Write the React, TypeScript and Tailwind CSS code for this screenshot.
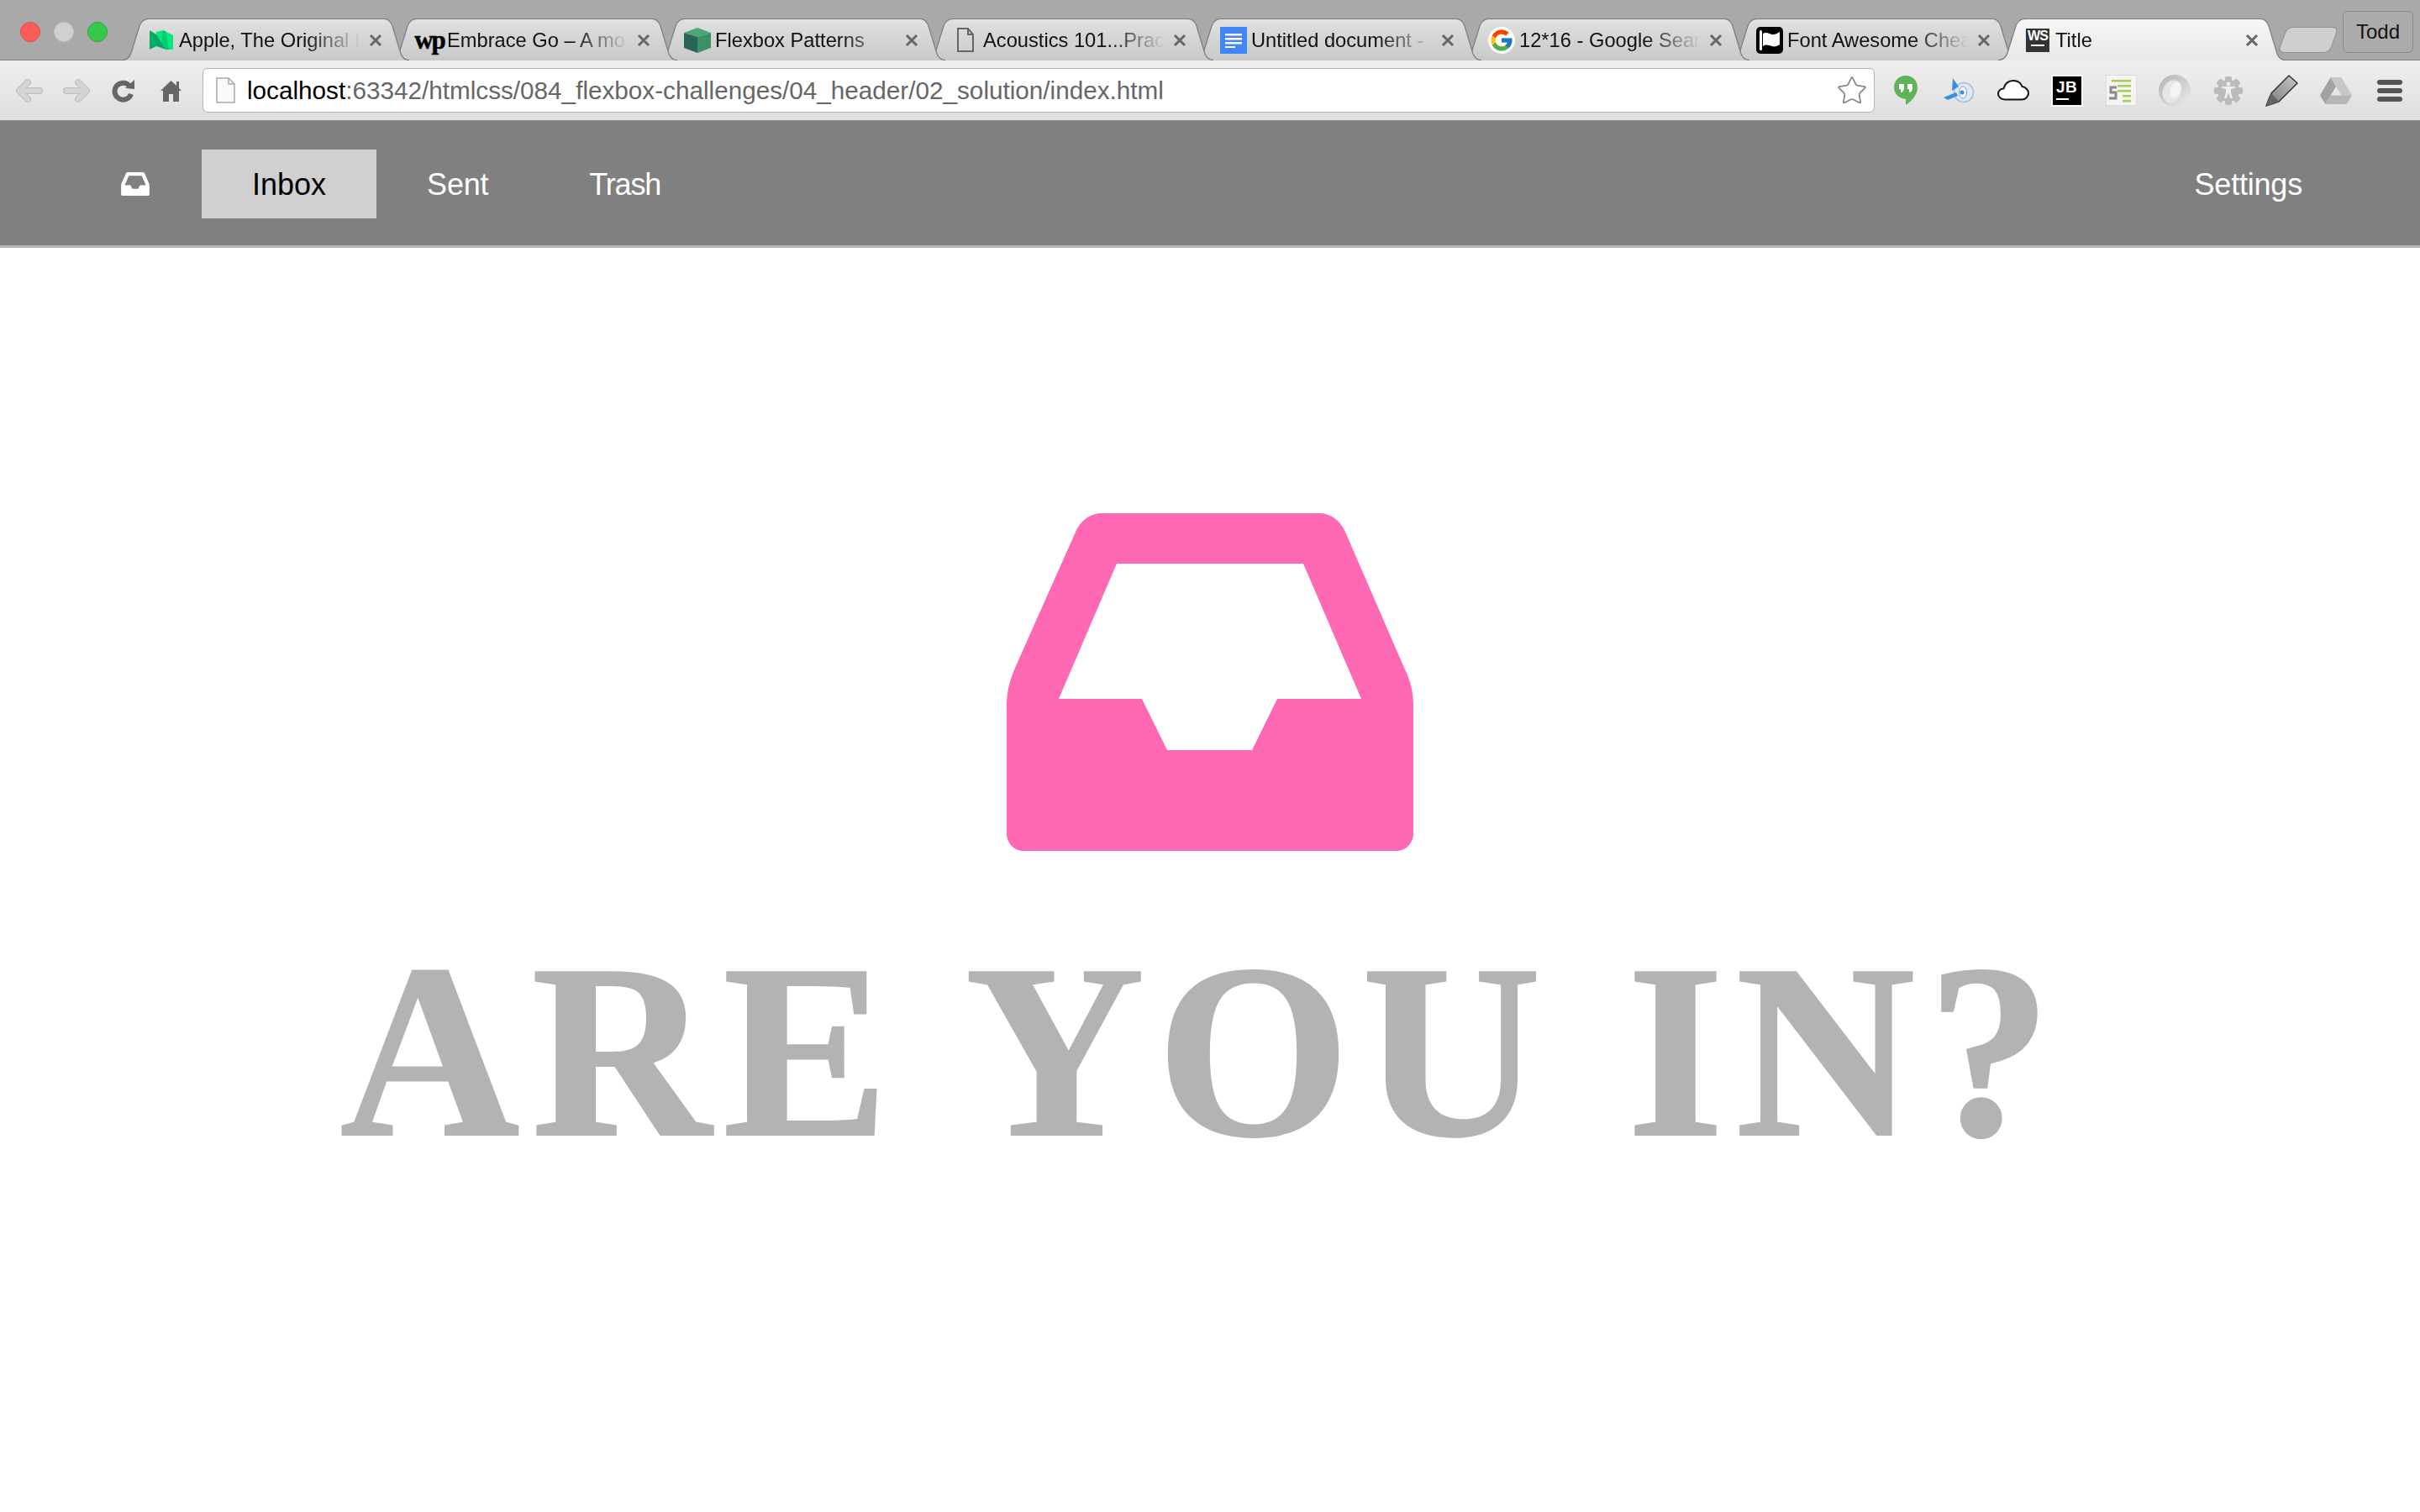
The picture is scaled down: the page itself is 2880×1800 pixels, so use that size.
import React from 'react';
import { Star } from 'lucide-react';
import { FcGoogle } from 'react-icons/fc';

function InboxGlyph({ className }: { className: string }) {
  return (
    <svg className={className} viewBox="0 0 484 402">
      <path
        fill="currentColor"
        fillRule="evenodd"
        d="M0 229C0 212 4 198 10 184L83 20C89 8 100 0 113 0L372 0C385 0 396 8 402 20L474 186C480 198 484 212 484 229L484 381C484 393 475 402 464 402L20 402C9 402 0 393 0 381ZM131 60L62 221L161 221L191 282L292 282L322 221L422 221L353 60Z"
      />
    </svg>
  );
}

function TabShape({ active }: { active: boolean }) {
  const id = active ? 'tab-active' : 'tab-idle';
  return (
    <svg className="absolute inset-0 w-full h-full" viewBox="0 0 342 50" preserveAspectRatio="none">
      <defs>
        <linearGradient id={id} x1="0" y1="0" x2="0" y2="1">
          <stop offset="0" stopColor={active ? '#f6f6f6' : '#e0e0e0'} />
          <stop offset="1" stopColor={active ? '#e8e8e8' : '#c9c9c9'} />
        </linearGradient>
      </defs>
      <path
        fill={`url(#${id})`}
        stroke="none"
        d="M0 50C6 50 9 47 11 41L21 9C23 4 26 0.5 32 0.5L312 0.5C317 0.5 320 4 322 9L332 42C334 47 337 50 342 50Z"
      />
      <path
        fill="none"
        stroke="#7c7c7c"
        strokeWidth="1.2"
        d="M0 49.5C6 49.5 9 47 11 41L21 9C23 4 26 0.5 32 0.5L312 0.5C317 0.5 320 4 322 9L332 42C334 47 337 49.5 342 49.5"
      />
    </svg>
  );
}

const Medium = (
  <svg width="28" height="23" viewBox="0 0 28 23">
    <polygon fill="#00ab6c" points="0,0 8,5 8,19 0,23" />
    <polygon fill="#02e87a" points="8,2 16,0 28,6 28,23 20,23 8,5" />
    <polygon fill="#00a868" points="8,5 20,23 8,19" />
    <polygon fill="#00cf70" points="16,0 19,1.500 23,23 20,23 14,14" />
  </svg>
);

const Cube = (
  <svg width="32" height="30" viewBox="0 0 32 30">
    <polygon fill="#4ba678" points="16,0 32,6 16,11 0,6" />
    <polygon fill="#296556" points="0,6 16,11 16,30 0,24" />
    <polygon fill="#3c9068" points="32,6 16,11 16,30 32,24" />
  </svg>
);

const BlankPage = (
  <svg width="20" height="29" viewBox="0 0 20 29">
    <path fill="none" stroke="#666" strokeWidth="2" d="M1 1H13L19 8V28H1ZM13 1V8H19" />
  </svg>
);

const Docs = (
  <svg width="32" height="32" viewBox="0 0 32 32">
    <rect width="32" height="32" fill="#4285f4" />
    <path fill="#fff" d="M6 8H26V10.500H6ZM6 13H26V15.500H6ZM6 18H26V20.500H6ZM6 23H18V25H6Z" />
  </svg>
);

const Flag = (
  <svg width="32" height="32" viewBox="0 0 32 32">
    <rect width="32" height="32" rx="5" fill="#000" />
    <rect x="4" y="4" width="3" height="24" rx="1.500" fill="#fff" />
    <path fill="#fff" d="M8 8C13 5 17 10 21 9C24 8.500 26 7 28 6V21C25 23 22 24 19 23C15 22 12 20 8 23Z" />
  </svg>
);

const tabs: { title: string; icon: React.ReactNode; active?: boolean }[] = [
  { title: 'Apple, The Original I', icon: Medium },
  {
    title: 'Embrace Go – A mo',
    icon: <span className="font-['Liberation_Serif'] font-bold text-[31px] leading-none tracking-[-2px] text-black [-webkit-text-stroke:0.5px_black]">wp</span>,
  },
  { title: 'Flexbox Patterns', icon: Cube },
  { title: 'Acoustics 101...Prac', icon: BlankPage },
  { title: 'Untitled document -', icon: Docs },
  {
    title: '12*16 - Google Sear',
    icon: (
      <span className="flex w-[32px] h-[32px] items-center justify-center rounded-full bg-white">
        <FcGoogle size={30} />
      </span>
    ),
  },
  { title: 'Font Awesome Chea', icon: Flag },
  {
    title: 'Title',
    active: true,
    icon: (
      <span className="flex flex-col items-center w-[28px] h-[28px] bg-[#333] text-white font-bold text-[16px] leading-[18px] tracking-[-1px]">
        WS
        <span className="w-[16px] h-[2px] bg-white mt-[1px]" />
      </span>
    ),
  },
];

const tabStack = ['z-[8]', 'z-[7]', 'z-[6]', 'z-[5]', 'z-[4]', 'z-[3]', 'z-[2]', 'z-[9]'];

function Tab({ title, icon, active, index }: { title: string; icon: React.ReactNode; active?: boolean; index: number }) {
  return (
    <div className={`relative w-[342px] h-[50px] -mb-px shrink-0 ${index > 0 ? '-ml-[23px]' : ''} ${tabStack[index]}`}>
      <TabShape active={!!active} />
      <div className="relative flex items-center h-full pl-[29px] pt-[1px]">
        <span className="flex w-[36px] justify-center shrink-0">{icon}</span>
        <span className="ml-[3px] w-[216px] overflow-hidden whitespace-nowrap text-[23.7px] leading-[30px] text-[#111] [mask-image:linear-gradient(to_right,black_150px,transparent_216px)]">
          {title}
        </span>
        <svg className="ml-[10px] shrink-0" width="16" height="16" viewBox="0 0 16 16">
          <path stroke="#666" strokeWidth="3" d="M2 2L14 14M14 2L2 14" />
        </svg>
      </div>
    </div>
  );
}

function Arrow({ flip }: { flip?: boolean }) {
  return (
    <svg width="32" height="28" viewBox="0 0 32 28" className={flip ? '-scale-x-100' : ''}>
      <path fill="none" stroke="#bdbdbd" strokeWidth="8" strokeLinecap="round" strokeLinejoin="round" d="M28 14H5M14 4L4 14L14 24" />
      <path fill="none" stroke="#d4d4d4" strokeWidth="6" strokeLinecap="round" strokeLinejoin="round" d="M28 14H5M14 4L4 14L14 24" />
    </svg>
  );
}

const toolbarIcons: React.ReactNode[] = [
  <svg key="hangouts" width="28" height="35" viewBox="0 0 28 35">
    <path fill="#5fb35b" d="M14 0C6 0 0 6 0 14C0 22 6 27 14 28V35C22 30 28 22 28 14C28 6 22 0 14 0Z" />
    <path fill="#fff" d="M6 10H12V15C12 18 10 20 8 20V16H6ZM16 10H22V15C22 18 20 20 18 20V16H16Z" />
  </svg>,
  <svg key="appengine" width="38" height="30" viewBox="0 0 38 30">
    <circle cx="24" cy="17" r="11.500" fill="#dfe8f2" stroke="#9cc0e4" strokeWidth="1.500" />
    <ellipse cx="23" cy="17" rx="4.500" ry="7" fill="#f6f8fb" stroke="#8aa0b8" />
    <circle cx="22" cy="17" r="2.500" fill="#3a8fdc" />
    <polygon fill="#3a8fdc" points="11,0 18,10 10,15" />
    <polygon fill="#3a8fdc" points="0,23 15,17 17,21 5,26" />
  </svg>,
  <svg key="cloud" width="38" height="25" viewBox="0 0 38 25">
    <path fill="#fff" stroke="#111" strokeWidth="2" d="M9 23.500C4 23.500 1 20 1 16.500C1 13 4 10.500 7.500 10.500C9 5 13 1 19 1C24 1 28 4 29.500 8C33.500 8.500 37 12 37 16C37 20 33.500 23.500 29 23.500Z" />
  </svg>,
  <span key="jb" className="flex flex-col w-[38px] h-[38px] border-2 border-white bg-black text-white font-bold text-[19px] leading-[20px] pl-[4px] pt-[3px] tracking-[0.5px]">
    JB
    <span className="w-[15px] h-[2px] bg-white mt-[3px]" />
  </span>,
  <svg key="outliner" width="37" height="37" viewBox="0 0 37 37">
    <rect x="0.500" y="0.500" width="36" height="36" fill="#f4f4f4" stroke="#dcdcdc" />
    <path fill="#a5cf4f" d="M7 6H30V8.500H7ZM14 12H30V14.500H14ZM14 18H30V20.500H14ZM20 24H30V26.500H20ZM20 30H30V32.500H20Z" />
    <path fill="none" stroke="#8a8a8a" strokeWidth="3" d="M13 15H6V21H12V28H4" />
  </svg>,
  <svg key="json" width="38" height="38" viewBox="0 0 38 38">
    <defs>
      <linearGradient id="json-ring" x1="0" y1="0" x2="1" y2="1">
        <stop offset="0" stopColor="#b4b4b4" />
        <stop offset="0.6" stopColor="#d4d4d4" />
        <stop offset="1" stopColor="#eeeeee" />
      </linearGradient>
    </defs>
    <circle cx="19" cy="19" r="19" fill="url(#json-ring)" />
    <ellipse cx="16" cy="20" rx="11" ry="14" fill="#e6e6e6" transform="rotate(20 16 20)" />
    <ellipse cx="20" cy="18" rx="6" ry="10" fill="#f4f4f4" transform="rotate(20 20 18)" />
  </svg>,
  <svg key="gear" width="34" height="34" viewBox="0 0 34 34">
    <g fill="#bbb">
      <circle cx="17" cy="17" r="13" />
      <rect x="13" y="0" width="8" height="34" rx="2" />
      <rect x="13" y="0" width="8" height="34" rx="2" transform="rotate(45 17 17)" />
      <rect x="13" y="0" width="8" height="34" rx="2" transform="rotate(90 17 17)" />
      <rect x="13" y="0" width="8" height="34" rx="2" transform="rotate(135 17 17)" />
    </g>
    <circle cx="17" cy="9" r="2.500" fill="#eee" />
    <path fill="#eee" d="M9 12H25V14L20 15V19L22 26H19.500L17 20L14.500 26H12L14 19V15L9 14Z" />
  </svg>,
  <svg key="marker" width="42" height="40" viewBox="0 0 42 40">
    <defs>
      <linearGradient id="marker-body" x1="0" y1="1" x2="1" y2="0">
        <stop offset="0" stopColor="#777777" />
        <stop offset="1" stopColor="#c8c8c8" />
      </linearGradient>
    </defs>
    <path fill="url(#marker-body)" stroke="#333" strokeWidth="1.500" strokeLinejoin="round" d="M8 23L29 2L39 11L17 33L11 35L2 38L5 30Z" />
    <path fill="#666" d="M5 30L8 23L17 33L11 35L2 38Z" />
  </svg>,
  <svg key="drive" width="38" height="32" viewBox="0 0 38 32">
    <polygon fill="#c8c8c8" points="12.700,0 25.300,0 38,21.500 25.300,21.500" />
    <polygon fill="#a2a2a2" points="12.700,0 19,11 6.300,32 0,21.500" />
    <polygon fill="#b6b6b6" points="6.300,32 12.700,21.500 38,21.500 31.700,32" />
  </svg>,
  <span key="menu" className="flex flex-col gap-[4px] w-[30px]">
    <span className="h-[6px] rounded-full bg-[#555]" />
    <span className="h-[6px] rounded-full bg-[#555]" />
    <span className="h-[6px] rounded-full bg-[#555]" />
  </span>,
];

function NavLink({ label, active, tight }: { label: string; active?: boolean; tight?: boolean }) {
  return (
    <a className={`flex items-center h-[82px] px-[60px] pt-[2px] text-[36px] ${tight ? 'tracking-[-1.2px]' : ''} ${active ? 'bg-[#d0d0d0] text-black' : 'text-white tracking-[-0.2px]'}`}>
      {label}
    </a>
  );
}

export default function App() {
  return (
    <div className="min-h-screen overflow-hidden bg-white font-['Liberation_Sans',sans-serif]">
      {/* Tab strip */}
      <div className="relative flex items-end h-[72px] border-b border-[#858585] bg-[#a9a9a9]">
        <div className="flex items-center self-start w-[145px] pl-[24px] pt-[26px] gap-[16px]">
          <span className="w-[24px] h-[24px] rounded-full bg-[#fc5d58] border border-[#e24b46]" />
          <span className="w-[24px] h-[24px] rounded-full bg-[#d0d0d0] border border-[#c4c4c4]" />
          <span className="w-[24px] h-[24px] rounded-full bg-[#36c84b] border border-[#2aa83c]" />
        </div>
        {tabs.map((tab, i) => (
          <Tab key={tab.title} index={i} {...tab} />
        ))}
        <div className="self-start mt-[32px] -ml-[4px] w-[62px] h-[31px] rounded-[7px] -skew-x-[20deg] border border-[#8e8e8e] bg-[#cfcfcf]" />
        <div className="self-start mt-[13px] ml-[10px] flex items-center justify-center w-[84px] h-[50px] rounded-[6px] border border-[#8a8a8a] bg-[#ababab] text-[24px] text-[#111]">
          Todd
        </div>
      </div>

      {/* Toolbar */}
      <div className="flex items-center h-[72px] border-b border-[#8c8c8c] bg-gradient-to-b from-[#efefef] to-[#dedede]">
        <div className="flex items-center ml-[7px] mr-[10px]">
          <span className="flex w-[56px] justify-center"><Arrow /></span>
          <span className="flex w-[56px] justify-center"><Arrow flip /></span>
          <span className="flex w-[56px] justify-center">
            <svg width="28" height="28" viewBox="0 0 28 28">
              <path fill="none" stroke="#666" strokeWidth="6" d="M21 8A10 10 0 1 0 23 18" />
              <polygon fill="#666" points="16,11 27,1 27,12" />
            </svg>
          </span>
          <span className="flex w-[56px] justify-center">
            <svg width="25" height="26" viewBox="0 0 25 26">
              <path fill="#666" d="M12.500 1L19 7V2H22V10L25 13H22V26H15V17H10V26H3V13H0Z" />
            </svg>
          </span>
        </div>
        <div className="flex flex-1 items-center h-[53px] rounded-[6px] border border-[#b4b4b4] bg-white pl-[15px] pr-[7px]">
          <svg width="23" height="31" viewBox="0 0 23 31" className="shrink-0">
            <path fill="#fafafa" stroke="#aaa" strokeWidth="1.500" d="M1 1H15L22 8V30H1ZM15 1V8H22" />
          </svg>
          <span className="ml-[14px] pt-[2px] text-[29.7px] text-[#666] whitespace-nowrap">
            <span className="text-black">localhost</span>:63342/htmlcss/084_flexbox-challenges/04_header/02_solution/index.html
          </span>
          <Star size={38} strokeWidth={1.1} className="ml-auto text-[#888] fill-white" />
        </div>
        <div className="flex items-center ml-[5px] pr-[4px]">
          {toolbarIcons.map((icon, i) => (
            <span key={i} className="flex w-[64px] justify-center">{icon}</span>
          ))}
        </div>
      </div>

      {/* App header */}
      <header className="flex items-center justify-between h-[151px] pt-[2px] border-b-[3px] border-[#b4b4b4] bg-[#808080] pl-[78px] pr-[80px]">
        <nav className="flex items-center">
          <a className="flex w-[162px] justify-center pl-[3px] text-white">
            <InboxGlyph className="w-[34px] h-[28px]" />
          </a>
          <NavLink label="Inbox" active />
          <NavLink label="Sent" />
          <NavLink label="Trash" tight />
        </nav>
        <NavLink label="Settings" />
      </header>

      {/* Hero */}
      <main className="flex flex-col items-center pt-[316px]">
        <InboxGlyph className="w-[484px] h-[402px] text-[#ff69b4]" />
        <h1 className="mt-[68px] pr-[20px] whitespace-nowrap font-['Liberation_Serif',serif] font-bold text-[296px] leading-[1.15] tracking-[14px] text-[#b3b3b3] [-webkit-text-stroke:2px_#b3b3b3]">
          ARE YOU IN?
        </h1>
      </main>
    </div>
  );
}
